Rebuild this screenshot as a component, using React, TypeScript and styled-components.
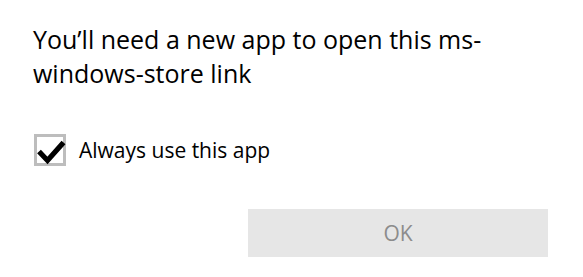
import React from "react";
import styled, { createGlobalStyle } from "styled-components";

const Global = createGlobalStyle`
  html, body { margin: 0; padding: 0; background: #ffffff; }
  body { font-family: "Open Sans", "Noto Sans", sans-serif; color: #000; }
`;

const Dialog = styled.div`
  width: 583px;
  height: 277px;
  box-sizing: border-box;
  padding: 22px 35px 0 33px;
  display: flex;
  flex-direction: column;
  background: #fff;
`;

const Title = styled.h1`
  margin: 0;
  font-size: 25px;
  font-weight: 400;
  line-height: 34px;
  color: #000;
`;

const CheckRow = styled.label`
  display: flex;
  align-items: center;
  gap: 13px;
  margin-top: 44px;
  margin-left: 1px;
  font-size: 21px;
  line-height: 30px;
  color: #000;
`;

const Box = styled.span`
  position: relative;
  width: 32px;
  height: 32px;
  box-sizing: border-box;
  border: 3px solid #bdbdbd;
  background: #fff;
  flex: none;
`;

const Check = styled.svg`
  position: absolute;
  left: -3px;
  top: -3px;
  width: 32px;
  height: 32px;
`;

const Footer = styled.div`
  display: flex;
  justify-content: flex-end;
  margin-top: 43px;
`;

const Button = styled.button`
  width: 300px;
  height: 48px;
  border: none;
  background: #e6e6e6;
  color: #8c8c8c;
  font-family: "Open Sans", "Noto Sans", sans-serif;
  font-size: 21px;
  font-weight: 500;
  padding: 0;
  cursor: default;
`;

export default function App() {
  return (
    <>
      <Global />
      <Dialog>
        <Title>
          You’ll need a new app to open this ms-
          <br />
          windows-store link
        </Title>
        <CheckRow>
          <Box>
            <Check viewBox="0 0 32 32">
              <path d="M5 17.5 L13.5 26.5 L29.5 8.5" fill="none" stroke="#000" strokeWidth="5.2" strokeLinecap="butt" strokeLinejoin="miter" />
            </Check>
          </Box>
          Always use this app
        </CheckRow>
        <Footer>
          <Button disabled>OK</Button>
        </Footer>
      </Dialog>
    </>
  );
}
